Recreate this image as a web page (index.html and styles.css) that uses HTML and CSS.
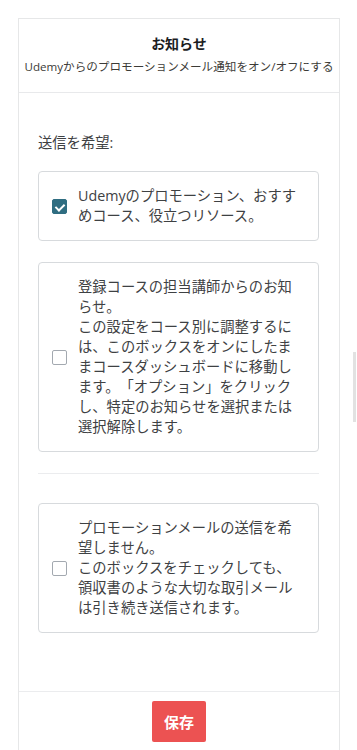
FILE: index.html
```html
<!DOCTYPE html>
<html lang="ja">
<head>
    <meta charset="UTF-8">
    <meta name="viewport" content="width=device-width, initial-scale=1.0">
    <title>お知らせ</title>
    <link rel="stylesheet" href="styles.css">
</head>
<body>
    <div class="panel">
        <div class="panel-header">
            <h2>お知らせ</h2>
            <p>Udemyからのプロモーションメール通知をオン/オフにする</p>
        </div>

        <!-- Preferences -->
        <div class="panel-body">
            <div class="group-label">送信を希望:</div>

            <label class="option">
                <input type="checkbox" checked>
                <span class="box"></span>
                <span class="text">Udemyのプロモーション、おすすめコース、役立つリソース。</span>
            </label>

            <label class="option">
                <input type="checkbox">
                <span class="box"></span>
                <span class="text">登録コースの担当講師からのお知らせ。<br>この設定をコース別に調整するには、このボックスをオンにしたままコースダッシュボードに移動します。「オプション」をクリックし、特定のお知らせを選択または選択解除します。</span>
            </label>

            <hr>

            <label class="option">
                <input type="checkbox">
                <span class="box"></span>
                <span class="text">プロモーションメールの送信を希望しません。<br>このボックスをチェックしても、領収書のような大切な取引メールは引き続き送信されます。</span>
            </label>
        </div>

        <div class="panel-footer">
            <button>保存</button>
        </div>
    </div>

    <div class="scroll-thumb"></div>
</body>
</html>
```

FILE: styles.css
```css
body {
    margin: 0;
    padding: 18px 17px 0 18px;
    font-family: "Open Sans", "Noto Sans CJK JP", sans-serif;
    color: #3e4143;
    background: #fff;
    text-spacing-trim: space-all;
}
.panel {
    border: 1px solid #e6e7e8;
    border-bottom: none;
}
.panel-header {
    text-align: center;
    padding: 15px 0 16px;
    border-bottom: 1px solid #e8e9eb;
}
.panel-header h2 {
    margin: 0;
    font-size: 14px;
    line-height: 20px;
    font-weight: 700;
    color: #1c1d1f;
}
.panel-header p {
    margin: 4px 0 0;
    font-size: 11.6px;
    line-height: 18px;
    color: #3c3b37;
}
.panel-body {
    padding: 40px 20px 58px 19px;
    font-size: 14.3px;
    line-height: 20px;
}
.group-label {
    margin-bottom: 18px;
}
.option {
    display: flex;
    align-items: center;
    gap: 11px;
    padding: 14px 20px 14px 13px;
    border: 1px solid #d7dadd;
    border-radius: 4px;
    margin-bottom: 21px;
    cursor: pointer;
}
.option:last-child {
    margin-bottom: 0;
}
.option input {
    display: none;
}
.box {
    flex: none;
    width: 15px;
    height: 15px;
    box-sizing: border-box;
    border: 1px solid #a3a9b0;
    border-radius: 2px;
    background: #fff;
    position: relative;
}
.option input:checked + .box {
    background: #2f6d81;
    border-color: #2f6d81;
}
.option input:checked + .box::after {
    content: "";
    position: absolute;
    left: 4px;
    top: 2px;
    width: 4px;
    height: 7px;
    border: solid #fff;
    border-width: 0 2px 2px 0;
    transform: rotate(45deg);
}
.text {
    flex: 1;
}
hr {
    border: none;
    border-top: 1px solid #ebecee;
    margin: 0 0 29px;
}
.panel-footer {
    border-top: 1px solid #ebecee;
    padding: 9px 0 30px;
    text-align: center;
}
button {
    background-color: #ec5252;
    color: #fff;
    border: none;
    border-radius: 2px;
    height: 41px;
    padding: 0 12px;
    font-family: "Open Sans", "Noto Sans CJK JP", sans-serif;
    font-size: 15px;
    font-weight: 700;
    cursor: pointer;
}
.scroll-thumb {
    position: fixed;
    right: 1px;
    top: 352px;
    width: 3px;
    height: 70px;
    background: #e2e2e2;
}
```
